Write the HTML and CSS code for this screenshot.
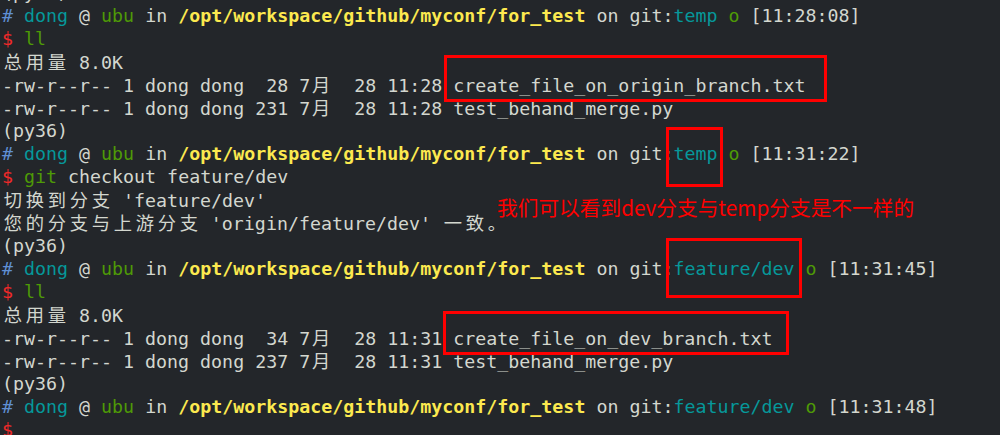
FILE: index.html
```html
<!DOCTYPE html>
<html>
<head>
<meta charset="utf-8">
<link rel="stylesheet" href="styles.css">
</head>
<body>
<div class="term">
<div class="ln">(py36)</div>
<div class="ln"><span class="hash">#</span> <span class="teal">dong</span> @ <span class="green">ubu</span> in <span class="path">/opt/workspace/github/myconf/for_test</span> on git:<span class="teal">temp</span> <span class="green">o</span> [11:28:08]</div>
<div class="ln"><span class="red">$</span> <span class="green">ll</span></div>
<div class="ln"><span class="cjk">总用量</span> 8.0K</div>
<div class="ln">-rw-r--r-- 1 dong dong  28 7<span class="cjk">月</span>  28 11:28 create_file_on_origin_branch.txt</div>
<div class="ln">-rw-r--r-- 1 dong dong 231 7<span class="cjk">月</span>  28 11:28 test_behand_merge.py</div>
<div class="ln">(py36)</div>
<div class="ln"><span class="hash">#</span> <span class="teal">dong</span> @ <span class="green">ubu</span> in <span class="path">/opt/workspace/github/myconf/for_test</span> on git:<span class="teal">temp</span> <span class="green">o</span> [11:31:22]</div>
<div class="ln"><span class="red">$</span> <span class="green">git</span> checkout feature/dev</div>
<div class="ln"><span class="cjk">切换到分支</span> 'feature/dev'</div>
<div class="ln"><span class="cjk">您的分支与上游分支</span> 'origin/feature/dev' <span class="cjk">一致。</span></div>
<div class="ln">(py36)</div>
<div class="ln"><span class="hash">#</span> <span class="teal">dong</span> @ <span class="green">ubu</span> in <span class="path">/opt/workspace/github/myconf/for_test</span> on git:<span class="teal">feature/dev</span> <span class="green">o</span> [11:31:45]</div>
<div class="ln"><span class="red">$</span> <span class="green">ll</span></div>
<div class="ln"><span class="cjk">总用量</span> 8.0K</div>
<div class="ln">-rw-r--r-- 1 dong dong  34 7<span class="cjk">月</span>  28 11:31 create_file_on_dev_branch.txt</div>
<div class="ln">-rw-r--r-- 1 dong dong 237 7<span class="cjk">月</span>  28 11:31 test_behand_merge.py</div>
<div class="ln">(py36)</div>
<div class="ln"><span class="hash">#</span> <span class="teal">dong</span> @ <span class="green">ubu</span> in <span class="path">/opt/workspace/github/myconf/for_test</span> on git:<span class="teal">feature/dev</span> <span class="green">o</span> [11:31:48]</div>
<div class="ln"><span class="red">$</span></div>

<div class="box box1"></div>
<div class="box box2"></div>
<div class="box box3"></div>
<div class="box box4"></div>
<div class="note">我们可以看到dev分支与temp分支是不一样的</div>
</div>
</body>
</html>
```

FILE: styles.css
```css
html, body {
  margin: 0;
  padding: 0;
  background: #23262a;
  overflow: hidden;
}
.term {
  position: relative;
  width: 1000px;
  height: 435px;
  overflow: hidden;
  background: #23262a;
  color: #d3d7cf;
  font-family: "DejaVu Sans Mono", "Noto Sans CJK SC", monospace;
  font-size: 18.3px;
  padding-left: 2px;
  box-sizing: border-box;
}
.ln {
  white-space: pre;
  height: 23px;
  line-height: 23px;
}
.ln:first-child {
  margin-top: -19px;
}
.cjk {
  font-family: "Noto Sans CJK SC", sans-serif;
  letter-spacing: 3.7px;
  padding-left: 1.85px;
  margin-right: -1.85px;
}
.hash { color: #5f8fd3; }
.teal { color: #06989a; }
.green { color: #4e9a06; }
.red { color: #ef2929; }
.path { color: #fce94f; font-weight: bold; }
.box {
  position: absolute;
  border: 3px solid #ff0000;
  box-sizing: border-box;
}
.box1 { left: 444px; top: 55px; width: 383px; height: 47px; }
.box2 { left: 666px; top: 127px; width: 57px; height: 60px; }
.box3 { left: 666px; top: 238px; width: 136px; height: 60px; }
.box4 { left: 443px; top: 311px; width: 346px; height: 44px; }
.note {
  position: absolute;
  left: 497px;
  top: 194px;
  font-family: "Noto Sans CJK SC", sans-serif;
  font-size: 20.7px;
  line-height: 26px;
  color: #ff0000;
  white-space: pre;
}
```
